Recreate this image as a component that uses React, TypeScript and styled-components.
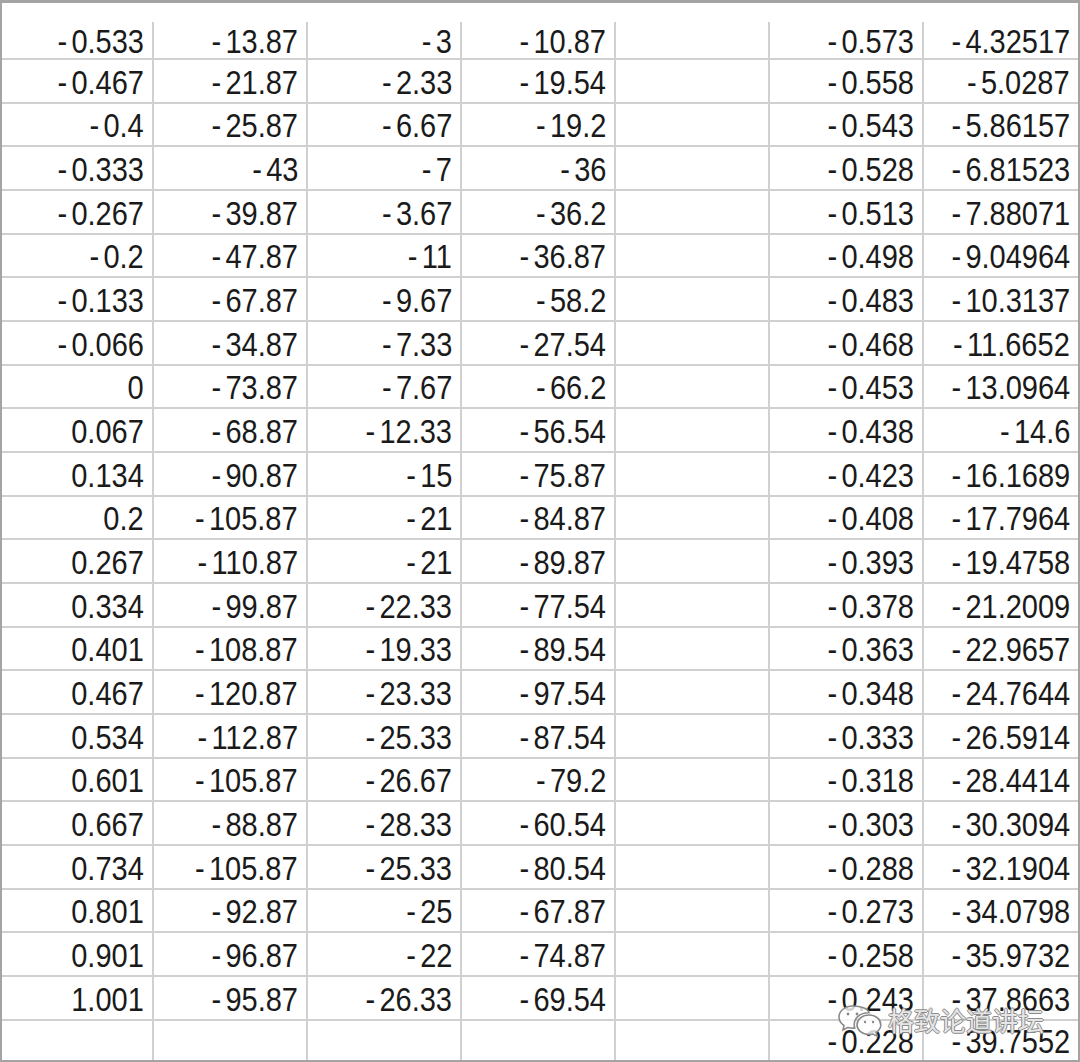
import styled, { createGlobalStyle } from "styled-components";

const GlobalStyle = createGlobalStyle`
  html, body {
    margin: 0;
    padding: 0;
    background: #ffffff;
  }
  * {
    box-sizing: border-box;
  }
`;

const rows: string[][] = [
  ["-0.533", "-13.87", "-3", "-10.87", "", "-0.573", "-4.32517"],
  ["-0.467", "-21.87", "-2.33", "-19.54", "", "-0.558", "-5.0287"],
  ["-0.4", "-25.87", "-6.67", "-19.2", "", "-0.543", "-5.86157"],
  ["-0.333", "-43", "-7", "-36", "", "-0.528", "-6.81523"],
  ["-0.267", "-39.87", "-3.67", "-36.2", "", "-0.513", "-7.88071"],
  ["-0.2", "-47.87", "-11", "-36.87", "", "-0.498", "-9.04964"],
  ["-0.133", "-67.87", "-9.67", "-58.2", "", "-0.483", "-10.3137"],
  ["-0.066", "-34.87", "-7.33", "-27.54", "", "-0.468", "-11.6652"],
  ["0", "-73.87", "-7.67", "-66.2", "", "-0.453", "-13.0964"],
  ["0.067", "-68.87", "-12.33", "-56.54", "", "-0.438", "-14.6"],
  ["0.134", "-90.87", "-15", "-75.87", "", "-0.423", "-16.1689"],
  ["0.2", "-105.87", "-21", "-84.87", "", "-0.408", "-17.7964"],
  ["0.267", "-110.87", "-21", "-89.87", "", "-0.393", "-19.4758"],
  ["0.334", "-99.87", "-22.33", "-77.54", "", "-0.378", "-21.2009"],
  ["0.401", "-108.87", "-19.33", "-89.54", "", "-0.363", "-22.9657"],
  ["0.467", "-120.87", "-23.33", "-97.54", "", "-0.348", "-24.7644"],
  ["0.534", "-112.87", "-25.33", "-87.54", "", "-0.333", "-26.5914"],
  ["0.601", "-105.87", "-26.67", "-79.2", "", "-0.318", "-28.4414"],
  ["0.667", "-88.87", "-28.33", "-60.54", "", "-0.303", "-30.3094"],
  ["0.734", "-105.87", "-25.33", "-80.54", "", "-0.288", "-32.1904"],
  ["0.801", "-92.87", "-25", "-67.87", "", "-0.273", "-34.0798"],
  ["0.901", "-96.87", "-22", "-74.87", "", "-0.258", "-35.9732"],
  ["1.001", "-95.87", "-26.33", "-69.54", "", "-0.243", "-37.8663"],
  ["", "", "", "", "", "-0.228", "-39.7552"],
];

const Sheet = styled.div`
  position: relative;
  width: 1080px;
  height: 1062px;
  border: 2px solid #a4a4a4;
  border-top-width: 3px;
  background: #ffffff;
  display: flex;
  flex-direction: column;
  overflow: hidden;
`;

const TopStrip = styled.div`
  height: 19px;
  flex: none;
`;

const Grid = styled.div`
  flex: 1;
  display: grid;
  grid-template-columns: 152px repeat(6, 1fr);
  grid-template-rows: 38px repeat(22, 43.68px) 1fr;
`;

const Cell = styled.div<{ $lastCol: boolean; $lastRow: boolean }>`
  display: flex;
  align-items: center;
  justify-content: flex-end;
  padding: 3px 8px 0 0;
  border-right: ${p => (p.$lastCol ? "none" : "2px solid #d0d0d0")};
  border-bottom: ${p => (p.$lastRow ? "none" : "2px solid #d0d0d0")};
  font-family: "Liberation Sans", Arial, sans-serif;
  font-size: 33.5px;
  color: #1a1a1a;
  white-space: nowrap;
  line-height: 1;
`;

const Num = styled.span`
  display: inline-block;
  transform: scaleX(0.866);
  transform-origin: right center;
`;

const Minus = styled.span`
  margin-right: 5px;
`;

const Watermark = styled.div`
  position: absolute;
  left: 834px;
  top: 998px;
  display: flex;
  align-items: center;
  gap: 6px;
`;

const MarkText = styled.span`
  font-family: "Noto Sans CJK SC", sans-serif;
  font-size: 26px;
  color: rgba(255, 255, 255, 0.8);
  text-shadow: 1px 0 0 #8c8c8c, -1px 0 0 #8c8c8c, 0 1px 0 #8c8c8c, 0 -1px 0 #8c8c8c;
`;

function Value({ text }: { text: string }) {
  if (text.startsWith("-")) {
    return (
      <Num>
        <Minus>-</Minus>
        {text.slice(1)}
      </Num>
    );
  }
  return <Num>{text}</Num>;
}

function WeChatIcon() {
  return (
    <svg width="46" height="34" viewBox="0 0 46 34" fill="rgba(255,255,255,0.8)" stroke="#8a8a8a" strokeWidth="1.6">
      <path d="M17 3C9 3 3 8 3 14c0 3.5 2 6.5 5 8.5L7 27l5-2.6c1.6.5 3.2.7 5 .7 .6 0 1.2 0 1.8-.1-.4-1.1-.6-2.3-.6-3.5 0-6.6 6.2-11.8 14-11.8h.9C31.7 5.6 25 3 17 3z" />
      <path d="M33 12c-6.8 0-12 4.4-12 9.8S26.2 31.6 33 31.6c1.4 0 2.8-.2 4-.6l4.2 2.2-1-3.8c2.7-1.8 4.6-4.6 4.6-7.6C44.8 16.4 39.8 12 33 12z" />
      <circle cx="12" cy="11" r="1.4" fill="#8a8a8a" stroke="none" />
      <circle cx="21" cy="11" r="1.4" fill="#8a8a8a" stroke="none" />
      <circle cx="29" cy="19" r="1.2" fill="#8a8a8a" stroke="none" />
      <circle cx="37" cy="19" r="1.2" fill="#8a8a8a" stroke="none" />
    </svg>
  );
}

export default function App() {
  return (
    <>
      <GlobalStyle />
      <Sheet>
        <TopStrip />
        <Grid>
          {rows.map((row, r) =>
            row.map((v, c) => (
              <Cell key={`${r}-${c}`} $lastCol={c === 6} $lastRow={r === rows.length - 1}>
                {v && <Value text={v} />}
              </Cell>
            ))
          )}
        </Grid>
        <Watermark>
          <WeChatIcon />
          <MarkText>格致论道讲坛</MarkText>
        </Watermark>
      </Sheet>
    </>
  );
}
